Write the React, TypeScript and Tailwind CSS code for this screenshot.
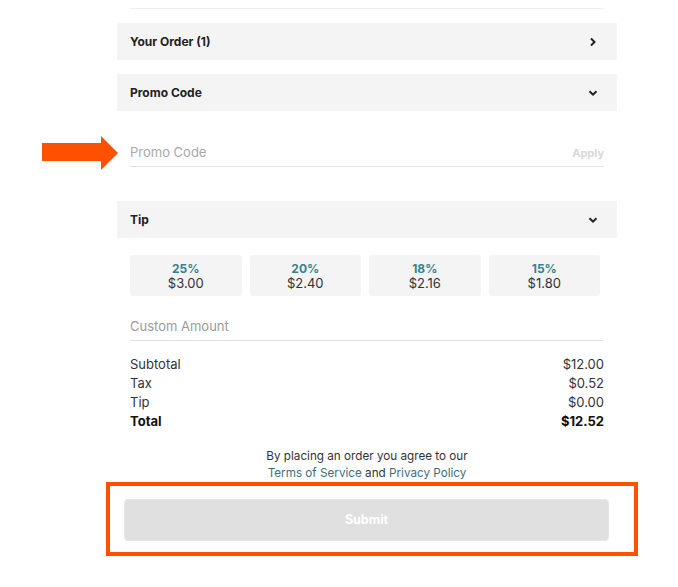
import type { ReactNode } from 'react';

const TIPS = [
  { pct: '25%', amount: '$3.00' },
  { pct: '20%', amount: '$2.40' },
  { pct: '18%', amount: '$2.16' },
  { pct: '15%', amount: '$1.80' },
];

const LINES = [
  { label: 'Subtotal', value: '$12.00' },
  { label: 'Tax', value: '$0.52' },
  { label: 'Tip', value: '$0.00' },
];

function Chevron({ dir }: { dir: 'right' | 'down' }) {
  return (
    <svg width="10" height="10" viewBox="0 0 10 10" className="text-[#222]">
      {dir === 'right' ? (
        <polyline points="3,1.5 6.5,5 3,8.5" fill="none" stroke="currentColor" strokeWidth="2" />
      ) : (
        <polyline points="1.5,3.2 5,6.7 8.5,3.2" fill="none" stroke="currentColor" strokeWidth="2" />
      )}
    </svg>
  );
}

function SectionBar({ title, dir }: { title: ReactNode; dir: 'right' | 'down' }) {
  return (
    <div className="flex h-[37px] items-center justify-between bg-[#f4f4f4] pl-[13px] pr-[19px]">
      <span className="text-[12px] font-bold text-[#222]">{title}</span>
      <Chevron dir={dir} />
    </div>
  );
}

export default function App() {
  return (
    <div className="relative h-[587px] w-[678px] overflow-hidden bg-white font-['Inter',sans-serif] text-[#333]">
      <div className="ml-[117px] w-[500px] pt-[8px]">
        <div className="mx-[13px] border-t border-[#efefef]" />

        <div className="mt-[14px]">
          <SectionBar title="Your Order (1)" dir="right" />
        </div>
        <div className="mt-[14px]">
          <SectionBar title="Promo Code" dir="down" />
        </div>

        {/* promo input */}
        <div className="mx-[13px] mt-[29px] flex h-[27px] items-center justify-between border-b border-[#e3e3e3]">
          <span className="text-[13px] text-[#a9a9a9]">Promo Code</span>
          <span className="text-[11px] font-bold text-[#d8d8d8]">Apply</span>
        </div>

        <div className="mt-[34px]">
          <SectionBar title="Tip" dir="down" />
        </div>

        <div className="mx-[13px] mt-[17px] grid w-[470px] grid-cols-4 gap-[8px]">
          {TIPS.map((t) => (
            <div
              key={t.pct}
              className="flex h-[41px] flex-col items-center justify-center rounded-[3px] bg-[#f4f4f4] leading-[15px]"
            >
              <span className="text-[12px] font-bold text-[#33838f]">{t.pct}</span>
              <span className="text-[13px] text-[#333]">{t.amount}</span>
            </div>
          ))}
        </div>

        {/* custom amount */}
        <div className="mx-[13px] mt-[18px] flex h-[27px] items-center border-b border-[#e3e3e3]">
          <span className="text-[13px] text-[#9a9a9a]">Custom Amount</span>
        </div>

        <div className="mx-[13px] mt-[14px] text-[13px] leading-[19px]">
          {LINES.map((l) => (
            <div key={l.label} className="flex justify-between text-[#333]">
              <span>{l.label}</span>
              <span>{l.value}</span>
            </div>
          ))}
          <div className="flex justify-between font-bold text-[#111]">
            <span>Total</span>
            <span>$12.52</span>
          </div>
        </div>

        <div className="mt-[17px] text-center text-[11.7px] leading-[17px]">
          <div className="text-[#333]">By placing an order you agree to our</div>
          <div className="text-[#333]">
            <span className="text-[#3d6e7c]">Terms of Service</span> and{' '}
            <span className="text-[#3d6e7c]">Privacy Policy</span>
          </div>
        </div>

        <div className="ml-[7px] mr-[8px] mt-[17px]">
          <button className="flex h-[42px] w-full items-center justify-center rounded-[4px] border border-[#e6e6e6] bg-[#e0e0e0] text-[12.5px] font-bold text-white">
            Submit
          </button>
        </div>
      </div>

      {/* annotation: arrow pointing at promo field */}
      <svg className="absolute left-[42px] top-[135px]" width="77" height="36" viewBox="0 0 77 36">
        <polygon points="0,8 59,8 59,1 76,18 59,35 59,26 0,26" fill="#ff5000" />
      </svg>

      {/* annotation: highlight around submit */}
      <div className="pointer-events-none absolute left-[106px] top-[482px] h-[74px] w-[532px] border-4 border-[#ff5000]" />
    </div>
  );
}
